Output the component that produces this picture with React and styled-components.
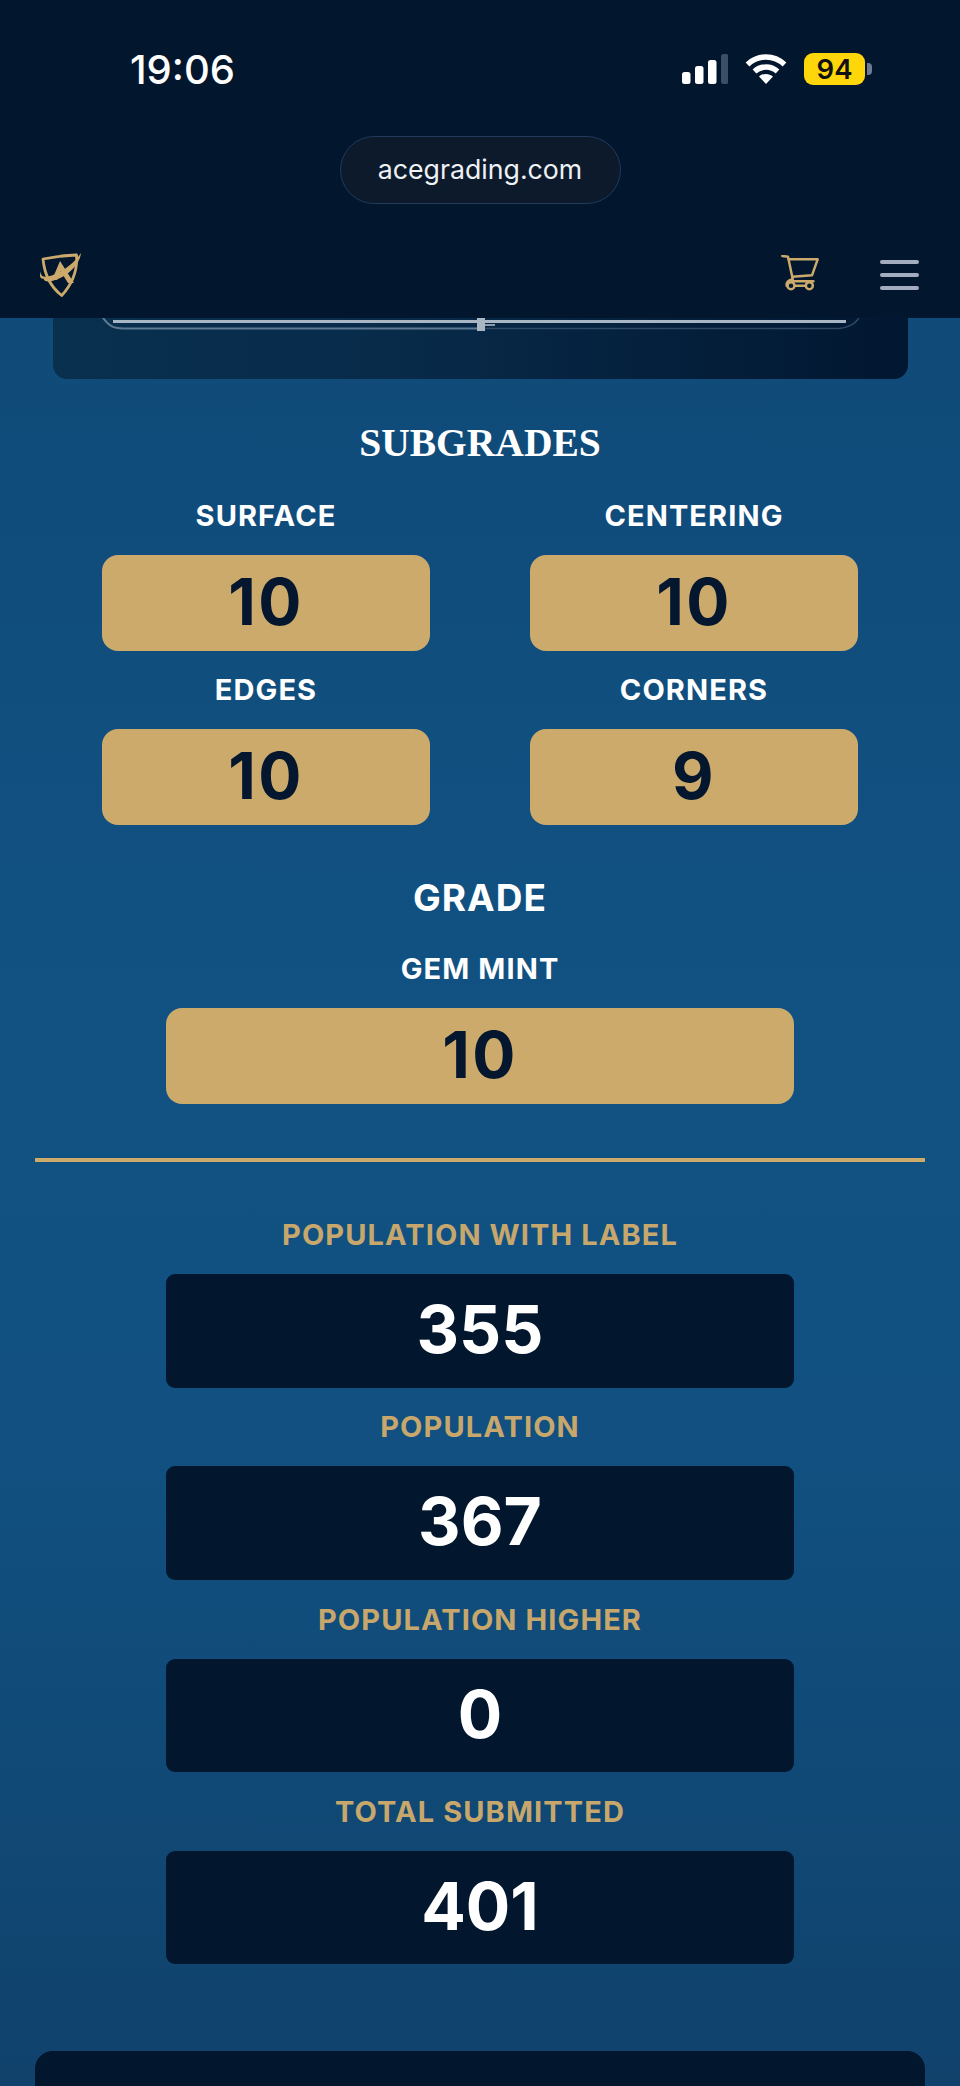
import React from 'react';
import styled, { createGlobalStyle } from 'styled-components';

const navy = '#02162e';
const gold = '#cbaa6b';

const GlobalStyle = createGlobalStyle`
  html, body {
    margin: 0;
    padding: 0;
  }
  * {
    box-sizing: border-box;
  }
`;

const Page = styled.div`
  width: 960px;
  height: 2086px;
  overflow: hidden;
  font-family: Inter, "Liberation Sans", sans-serif;
  color: white;
  background: linear-gradient(180deg, #0f4774 0%, #115283 50%, #115080 70%, #10426c 100%);
`;

const TopBar = styled.header`
  height: 318px;
  background: ${navy};
  display: flex;
  flex-direction: column;
`;

const StatusBar = styled.div`
  height: 136px;
  padding: 47px 95px 0 130px;
  display: flex;
  justify-content: space-between;
  align-items: flex-start;
`;

const Clock = styled.div`
  margin-top: 1px;
  font-size: 40px;
  line-height: 44px;
  font-weight: 500;
`;

const StatusIcons = styled.div`
  display: flex;
  align-items: center;
  gap: 17px;
  height: 44px;
`;

const Battery = styled.div`
  width: 61px;
  height: 32px;
  border-radius: 9px;
  background: #ffd60a;
  color: #111;
  font-size: 27.5px;
  font-weight: 600;
  line-height: 32px;
  text-align: center;
  position: relative;
  &::after {
    content: '';
    position: absolute;
    right: -7px;
    top: 10px;
    width: 5px;
    height: 12px;
    border-radius: 0 4px 4px 0;
    background: #6d7c90;
  }
`;

const AddressRow = styled.div`
  display: flex;
  justify-content: center;
`;

const AddressPill = styled.div`
  width: 281px;
  height: 68px;
  border-radius: 34px;
  border: 1.5px solid #1f3a5c;
  background: #0d1a2c;
  color: #eef1f5;
  font-size: 26.7px;
  line-height: 65px;
  text-align: center;
`;

const NavBar = styled.nav`
  margin-top: 48px;
  padding: 0 41px 0 38px;
  display: flex;
  align-items: center;
  justify-content: space-between;
`;

const NavActions = styled.div`
  display: flex;
  align-items: center;
  gap: 60px;
`;

const Burger = styled.div`
  width: 39px;
  display: flex;
  flex-direction: column;
  gap: 8.5px;
  span {
    height: 4.5px;
    border-radius: 3px;
    background: #a3adbf;
  }
`;

const CardBottom = styled.div`
  margin: 0 52px 0 53px;
  height: 61px;
  border-radius: 0 0 14px 14px;
  background: linear-gradient(90deg, #09304f 0%, #082b4a 40%, #04203c 70%, #021731 100%);
`;

const SlabEdge = styled.svg`
  display: block;
  width: 100%;
  height: 16px;
`;

const Title = styled.h2`
  margin: 0;
  padding-top: 42px;
  text-align: center;
  font-family: "Liberation Serif", serif;
  font-size: 39.5px;
  line-height: 44px;
  font-weight: 700;
`;

const SubgradeGrid = styled.div`
  margin-top: 34px;
  padding: 0 102px;
  display: grid;
  grid-template-columns: 328px 328px;
  justify-content: space-between;
  row-gap: 22px;
`;

const Stack = styled.div`
  display: flex;
  flex-direction: column;
  align-items: center;
  gap: 22px;
`;

const Label = styled.div`
  font-size: 29px;
  line-height: 34px;
  font-weight: 700;
  letter-spacing: 1.1px;
  color: ${(p) => (p.$gold ? '#c7a76c' : 'white')};
`;

const GoldBox = styled.div`
  width: ${(p) => p.$width}px;
  height: 96px;
  border-radius: 16px;
  background: ${gold};
  color: #04172e;
  font-size: 64px;
  line-height: 93px;
  font-weight: 700;
  letter-spacing: 2.5px;
  text-align: center;
`;

const GradeSection = styled.div`
  margin-top: 51px;
  display: flex;
  flex-direction: column;
  align-items: center;
`;

const GradeTitle = styled.div`
  font-size: 37px;
  line-height: 44px;
  font-weight: 700;
  letter-spacing: 1px;
  margin-bottom: 32px;
`;

const Divider = styled.hr`
  margin: 54px 35px 0;
  height: 4px;
  border: 0;
  background: ${gold};
`;

const PopulationList = styled.div`
  margin-top: 56px;
  display: flex;
  flex-direction: column;
  align-items: center;
  gap: 22.8px;
`;

const PopBox = styled.div`
  width: 628px;
  height: 113.5px;
  border-radius: 9px;
  background: ${navy};
  font-size: 66px;
  line-height: 110px;
  font-weight: 700;
  text-align: center;
`;

const BottomCard = styled.div`
  margin: 87px 35px 0;
  height: 60px;
  border-radius: 18px 18px 0 0;
  background: ${navy};
`;

const SignalIcon = () => (
  <svg width="46" height="30" viewBox="0 0 46 30">
    <rect x="0" y="18" width="8.5" height="12" rx="2.5" fill="#fff" />
    <rect x="13" y="12" width="8.5" height="18" rx="2.5" fill="#fff" />
    <rect x="26" y="6" width="8.5" height="24" rx="2.5" fill="#fff" />
    <rect x="39" y="0" width="7.5" height="30" rx="2.5" fill="#3d4f66" />
  </svg>
);

const WifiIcon = () => (
  <svg width="42" height="30" viewBox="0 0 42 30" fill="none">
    <path d="M2.5 10.5C13 0.5 29 0.5 39.5 10.5" stroke="#fff" strokeWidth="5.5" />
    <path d="M9.5 17.5C16 11.5 26 11.5 32.5 17.5" stroke="#fff" strokeWidth="5.5" />
    <path d="M14 22.5 C18 19 24 19 28 22.5 L21 30 Z" fill="#fff" />
  </svg>
);

// crest traced from the nav bar: shield outline, letter A, swoosh across it
const LogoIcon = () => (
  <svg width="44" height="46" viewBox="18 17 44 46" fill="none">
    <path d="M23 24C33 22 45 20.5 56.5 20C57.5 33 54 47 41.7 60.5C32 53 24.5 40 23 24Z" stroke={gold} strokeWidth="2.8" strokeLinejoin="round" />
    <path d="M40 26L32 45H37L40.5 36L48 48H54Z" fill={gold} />
    <path d="M61 18C60 29 49 40 37 44.5C29 47.5 24 47 23.5 43.5C21 45 18.5 41 21 36.5C20 43 26 42.5 33 40C45 35.5 55 27 61 18Z" fill={gold} />
  </svg>
);

const CartIcon = () => (
  <svg width="40" height="40" viewBox="0 5 120 120" fill="none" stroke={gold} strokeWidth="7.5" strokeLinecap="round" strokeLinejoin="round">
    <path d="M7 8L24 10L38 76" />
    <path d="M26 18H113L96 66L37 70" />
    <path d="M38 78C26 80 18 86 20 97" />
    <path d="M36 84H100" />
    <circle cx="33" cy="97" r="10.5" />
    <circle cx="88" cy="97" r="10.5" />
    <path d="M44 97H77" />
  </svg>
);

const SlabLines = () => (
  <SlabEdge viewBox="0 0 855 16" preserveAspectRatio="none" fill="none">
    <path d="M60 3.5H793" stroke="#a9b6c4" strokeWidth="3" />
    <path d="M50 0C56 8 60 10 70 10.5H424" stroke="#5f7a94" strokeWidth="2" />
    <path d="M432 10.5H786C794 10 802 6 806 0" stroke="#2f4a66" strokeWidth="1.5" />
    <path d="M424 0H432V13H424Z" fill="#a9b6c4" />
    <path d="M432 7H442" stroke="#8b9aaa" strokeWidth="2" />
  </SlabEdge>
);

const subgrades = [
  { label: 'SURFACE', value: 10 },
  { label: 'CENTERING', value: 10 },
  { label: 'EDGES', value: 10 },
  { label: 'CORNERS', value: 9 }
];

const population = [
  { label: 'POPULATION WITH LABEL', value: 355 },
  { label: 'POPULATION', value: 367 },
  { label: 'POPULATION HIGHER', value: 0 },
  { label: 'TOTAL SUBMITTED', value: 401 }
];

export default function App() {
  return (
    <Page>
      <GlobalStyle />
      <TopBar>
        <StatusBar>
          <Clock>19:06</Clock>
          <StatusIcons>
            <SignalIcon />
            <WifiIcon />
            <Battery>94</Battery>
          </StatusIcons>
        </StatusBar>
        <AddressRow>
          <AddressPill>acegrading.com</AddressPill>
        </AddressRow>
        <NavBar>
          <LogoIcon />
          <NavActions>
            <CartIcon />
            <Burger>
              <span />
              <span />
              <span />
            </Burger>
          </NavActions>
        </NavBar>
      </TopBar>

      <CardBottom>
        <SlabLines />
      </CardBottom>

      <Title>SUBGRADES</Title>
      <SubgradeGrid>
        {subgrades.map((item) => (
          <Stack key={item.label}>
            <Label>{item.label}</Label>
            <GoldBox $width={328}>{item.value}</GoldBox>
          </Stack>
        ))}
      </SubgradeGrid>

      <GradeSection>
        <GradeTitle>GRADE</GradeTitle>
        <Stack>
          <Label>GEM MINT</Label>
          <GoldBox $width={628}>10</GoldBox>
        </Stack>
      </GradeSection>

      <Divider />

      <PopulationList>
        {population.map((item) => (
          <Stack key={item.label}>
            <Label $gold>{item.label}</Label>
            <PopBox>{item.value}</PopBox>
          </Stack>
        ))}
      </PopulationList>

      <BottomCard />
    </Page>
  );
}
